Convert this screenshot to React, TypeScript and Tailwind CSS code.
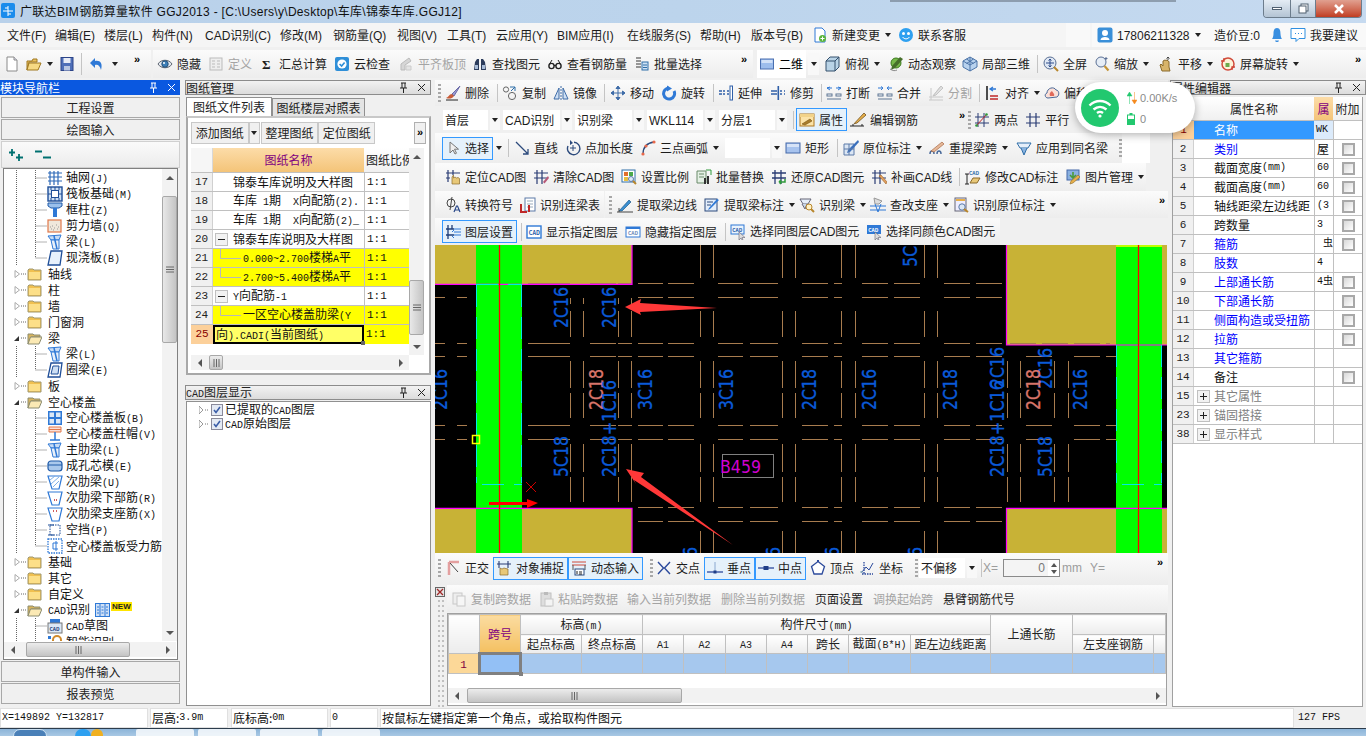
import type { ReactNode } from "react";
import clsx from "clsx";

const S = ({ children }: { children: ReactNode }) => (
  <svg viewBox="0 0 16 16" className="w-4 h-4 shrink-0">{children}</svg>
);

const ic: Record<string, ReactNode> = {
  doc: <S><path d="M3 1h7l3 3v11H3z" fill="#fff" stroke="#8a8a8a" /><path d="M10 1v3h3" fill="#dde" stroke="#8a8a8a" /></S>,
  open: <S><path d="M1 5h5l1-2h4v3h-8L1 14z" fill="#e8c060" stroke="#a07820" /><path d="M3 7h12l-3 7H1z" fill="#f6d984" stroke="#a07820" /></S>,
  save: <S><rect x="2" y="1.5" width="12" height="13" fill="#4f6fb8" stroke="#2c4488" /><rect x="4.5" y="2" width="7" height="5" fill="#e8ecf6" /><rect x="5" y="10" width="6" height="4.5" fill="#b9c6e2" /></S>,
  undo: <S><path d="M6 2v3C11 4 14 7 12 14 11 10 9 8 6 9v3L1 7z" fill="#2f79d6" /></S>,
  eye: <S><path d="M1 8c3-5 11-5 14 0-3 5-11 5-14 0z" fill="#e4e8ee" stroke="#5c6470" /><circle cx="8" cy="8" r="3.2" fill="#3d7fb8" stroke="#26527a" /><circle cx="7" cy="7" r="1" fill="#fff" /></S>,
  define: <S><rect x="2" y="2" width="12" height="12" fill="#eee" stroke="#bbb" /><path d="M4 5h3M4 8h3M4 11h3M9 5h3M9 8h3M9 11h3" stroke="#bbb" /></S>,
  cloudok: <S><rect x="1" y="1" width="14" height="14" rx="2" fill="#2f8fd8" /><circle cx="8" cy="8" r="4.6" fill="#fff" /><path d="M5.6 8l2 2 3-3.6" stroke="#2f8fd8" strokeWidth="1.6" fill="none" /></S>,
  flush: <S><path d="M3 14V8l8-6 2 3-6 4v5z" fill="#d6d6d6" stroke="#bbb" /><path d="M8 14h5v-4H8z" fill="#e4e4e4" stroke="#ccc" /></S>,
  binoc: <S><path d="M2 14l1-8 2-3h2v11zM14 14l-1-8-2-3H9v11z" fill="#2c3c5c" /><rect x="3" y="9" width="3" height="4" fill="#a8bcd8" /><rect x="10" y="9" width="3" height="4" fill="#a8bcd8" /></S>,
  glasses: <S><circle cx="4.5" cy="10" r="2.6" fill="none" stroke="#222" strokeWidth="1.4" /><circle cx="11.5" cy="10" r="2.6" fill="none" stroke="#222" strokeWidth="1.4" /><path d="M7 9.5h2M2.5 8L5 4M13.5 8L11 4" stroke="#222" /></S>,
  batch: <S><path d="M2 2h5M2 5h5M2 8h5M2 11h5" stroke="#777" strokeWidth="1.4" /><rect x="8" y="6" width="6" height="8" fill="#cfe2f4" stroke="#2f6ea8" /><path d="M9 9h4M9 11.5h4" stroke="#2f6ea8" /></S>,
  sq2d: <S><rect x="1.5" y="3" width="13" height="10" fill="#9dbdec" stroke="#4a6fb0" /><rect x="2.5" y="4" width="11" height="3" fill="#d2e1f7" /></S>,
  box3d: <S><path d="M5 1h9v10l-4 4H1V5z" fill="#b9d3e6" stroke="#35506c" /><path d="M1 5h9v10M10 5l4-4" fill="none" stroke="#35506c" /></S>,
  orbit: <S><circle cx="8" cy="7" r="5" fill="#77b94a" stroke="#3c7a1e" /><path d="M12 1l3 2-8 9-4 2 1-4z" fill="#466f2a" /><path d="M2 13c3 2 5 2 7 1" stroke="#888" fill="none" /></S>,
  cube: <S><path d="M8 1l7 4v6l-7 4-7-4V5z" fill="#b8d2ee" stroke="#4c74a8" /><path d="M8 1v14M1 5l7 4 7-4M4.5 3l7 4.5M11.5 3l-7 4.5" fill="none" stroke="#4c74a8" /></S>,
  full: <S><circle cx="7" cy="7" r="6" fill="#dfe8f4" stroke="#5a6f94" /><path d="M7 3v8M3 7h8M7 3L5.6 4.6M7 3l1.4 1.6M7 11l-1.4-1.6M7 11l1.4-1.6" stroke="#2c4a8a" fill="none" /><path d="M11 11l4 4" stroke="#b8862c" strokeWidth="2" /></S>,
  zoomg: <S><circle cx="7" cy="6" r="5" fill="#e6edf6" stroke="#5a6f94" /><path d="M10.5 10l4 4.5" stroke="#c49436" strokeWidth="2.2" /><path d="M12 1v3M10.5 2.5h3" stroke="#5a6f94" /></S>,
  hand: <S><path d="M4 15l-2-6 1-1 2 2V5l1-.5L7 4l1 .5L9 4l1 1 1 .5V11l1 4z" fill="#d8b46a" stroke="#8a6a2c" /><path d="M10 1v3M8.5 2.5L10 1l1.5 1.5" stroke="#444" fill="none" /></S>,
  rotate: <S><circle cx="8" cy="8" r="6" fill="#fdf3d8" stroke="#d04a3a" strokeWidth="1.5" /><path d="M1 5l3 0 0-3M15 11l-3 0 0 3" stroke="#d04a3a" strokeWidth="1.4" fill="none" /><rect x="5.5" y="7" width="4" height="4" fill="#6cab4c" /></S>,
  brush: <S><path d="M15 1L7 9l2 2z" fill="#9a9ad0" stroke="#6a6aa8" /><path d="M7 9c-3 0-3 3-6 4 3 1 6 1 8-2z" fill="#c85c38" /><path d="M1 15h12" stroke="#222" /></S>,
  copy: <S><circle cx="4" cy="4.5" r="2.6" fill="none" stroke="#666" /><circle cx="10" cy="11" r="3.6" fill="none" stroke="#666" /><path d="M8 2h5v4M13 2L9 6" stroke="#2f6ea8" fill="none" /></S>,
  mirror: <S><path d="M1 14L6 3v11zM15 14L10 3v11z" fill="#cfe0f4" stroke="#3f6ca8" /><path d="M8 1v14" stroke="#3f6ca8" strokeDasharray="2 1" /></S>,
  move: <S><path d="M8 1v14M1 8h14M8 1L6 3.5h4zM8 15l-2-2.5h4zM1 8l2.5-2v4zM15 8l-2.5-2v4z" fill="#3f6ca8" stroke="#3f6ca8" /></S>,
  turn: <S><path d="M8 3a5.5 5.5 0 1 0 5 3" fill="none" stroke="#2f79d6" strokeWidth="3" /><path d="M6 .5v6L11 3.500z" fill="#2f79d6" /></S>,
  extend: <S><path d="M1 6h3M5 6h2M9 6h2M1 9h3M5 9h2M9 9h2" stroke="#2f5fa8" strokeWidth="1.3" /><rect x="12" y="1" width="2.500" height="14" fill="#fff" stroke="#2f5fa8" /></S>,
  trim: <S><path d="M1 6h6M1 9h6M10 6h2M14 6h1M10 9h2M14 9h1" stroke="#2f5fa8" strokeWidth="1.3" /><rect x="7.5" y="1" width="1.600" height="14" fill="#2f5fa8" /></S>,
  breakk: <S><path d="M1 3h5M10 3h5M4 2L1 3l3 2M12 2l3 1-3 2" stroke="#2f79d6" fill="none" /><rect x="1" y="9" width="5" height="2" fill="#fff" stroke="#5e7694" /><rect x="10" y="9" width="5" height="2" fill="#fff" stroke="#5e7694" /><path d="M1 14h14" stroke="#5e7694" /></S>,
  merge: <S><path d="M1 3h4M15 3h-4M4 1.500L6 3 4 5M12 1.500L10 3l2 2" stroke="#2f79d6" fill="none" /><rect x="1" y="9" width="5" height="2" fill="#fff" stroke="#5e7694" /><rect x="10" y="9" width="5" height="2" fill="#fff" stroke="#5e7694" /><path d="M1 14h14" stroke="#5e7694" /></S>,
  split: <S><path d="M1 12h14M1 15h14M3 3v12M13 1L5 11" stroke="#c8c8c8" /><path d="M13 1l2 2-7 7-3 1z" fill="#e0e0e0" stroke="#c4c4c4" /></S>,
  align: <S><path d="M2 1v14" stroke="#222" strokeWidth="1.600" /><path d="M5 4h6M8 2L5 4l3 2" stroke="#2f79d6" fill="none" strokeWidth="1.300" /><path d="M5 11h8M5 14h8" stroke="#c02828" strokeWidth="1.500" /></S>,
  offset: <S><path d="M4 13C1 13 0 9 3 8c0-5 7-7 9-3 3 0 4 5 1 7z" fill="#fbe0d8" stroke="#4a6a9a" /><path d="M6 11c-1-2 0-4 2-5 1 2 3 3 2 5z" fill="#e06a5a" /></S>,
  attr: <S><rect x="1" y="2" width="14" height="12" fill="#fbe3a8" stroke="#b07820" /><rect x="1" y="2" width="14" height="3" fill="#f2d38a" /><path d="M3 12l8-5 2 2-7 4z" fill="#a87c2c" stroke="#7a5410" strokeWidth=".6" /></S>,
  pencil: <S><path d="M14 1l2 2-9 8-3 .8z" fill="#e8b04a" stroke="#6e5020" strokeWidth=".8" /><path d="M0 14h14M3 14l0-2M12 14v-2" stroke="#222" /></S>,
  twopt: <S><path d="M4 1v14M10 1v14M1 5h14M1 11h14" stroke="#2a3c74" /><path d="M2 14L13 2" stroke="#c02828" /><circle cx="2.500" cy="13.500" r="1.300" fill="#2e9a3a" /><circle cx="12.500" cy="2.500" r="1.300" fill="#2e9a3a" /></S>,
  para: <S><path d="M5 1v14M11 1v14M1 5h14M1 11h14" stroke="#2a3c74" strokeWidth="1.200" /></S>,
  cursor: <S><path d="M5 2v11l3-3 2 4 1.500-.8-2-4h4z" fill="#eee" stroke="#777" /></S>,
  line: <S><path d="M2 2l12 12M14 9v5H9" stroke="#2c4a7c" strokeWidth="1.300" fill="none" /></S>,
  ptlen: <S><path d="M9 2.300A6.200 6.200 0 1 1 3 6" fill="none" stroke="#2c4a7c" strokeWidth="1.400" /><path d="M8 5v6M5 8h6" stroke="#2c4a7c" /><path d="M5 0v5l3-2z" fill="#2c4a7c" /></S>,
  arc: <S><path d="M3 14C3 7 7 3 14 2" fill="none" stroke="#2c4a7c" strokeWidth="1.300" /><circle cx="3" cy="14" r="1.600" fill="#e8684a" /><circle cx="6" cy="6" r="1.600" fill="#e8684a" /><circle cx="14" cy="2" r="1.600" fill="#e8684a" /></S>,
  rect: <S><rect x="1" y="3" width="14" height="10" fill="#a7c3ee" stroke="#4468a8" /><rect x="2" y="4" width="12" height="3" fill="#d6e3f7" /></S>,
  origin: <S><path d="M1 4h10v11H1z" fill="#dbe6f4" stroke="#5c7aa8" /><path d="M15 0L5 10l-1 3 3-1L16 2z" fill="#3a6fbc" /><path d="M1 9h10M6 4v11" stroke="#5c7aa8" /></S>,
  respan: <S><path d="M1 14c0-4 4-4 4 0M8 14c0-4 4-4 4 0" fill="none" stroke="#4a6a9a" strokeWidth="1.500" /><path d="M2 11L13 2l2 2-10 8z" fill="#e6b898" stroke="#a86a48" strokeWidth=".7" /></S>,
  apply: <S><path d="M1 3h14l-3 5H4z" fill="#e6effa" stroke="#2f6ea8" /><path d="M5 8l3 7 3-7" fill="#8ab3e0" stroke="#2f6ea8" /></S>,
  locate: <S><path d="M3 1v12M8 1v5M1 4h14M1 9h4" stroke="#2a3c74" strokeWidth="1.200" /><path d="M7 15V8l1.500-2v3l1.500-1 1.500 1 1.500-.5 1.500 1v5.500z" fill="#e8c878" stroke="#8a6a2c" strokeWidth=".7" /></S>,
  clearc: <S><path d="M4 1v14M9 1v14M1 4h14M1 9h14" stroke="#2a3c74" strokeWidth="1.200" /><path d="M15 7l-5 6 1.500 1.500L16 9z" fill="#b85a78" /></S>,
  scale: <S><rect x="1" y="1" width="13" height="12" fill="#fff" stroke="#2f6ea8" /><rect x="3" y="3" width="4" height="4" fill="#e2702c" /><rect x="8" y="3" width="4" height="4" fill="#4aa84a" /><rect x="3" y="8" width="4" height="4" fill="#e8c040" /><path d="M10 10l5 5" stroke="#b8862c" strokeWidth="2" /><circle cx="10" cy="10" r="2.500" fill="#dbe8f6" stroke="#5c7aa8" /></S>,
  replace: <S><path d="M1 2h9v12H1z" fill="#e4f0e4" stroke="#6a8a6a" /><path d="M3 5h5M3 8h5" stroke="#6a8a6a" /><rect x="8" y="9" width="2" height="6" fill="#333" /><rect x="11" y="7" width="2" height="8" fill="#333" /><path d="M10 1h5v5" stroke="#2e9a3a" fill="none" /></S>,
  restore: <S><path d="M4 1v14M10 1v14M1 4h14M1 9h14" stroke="#2a3c74" strokeWidth="1.300" /><path d="M8 13h6v-3M8 13l2-2M8 13l2 2" stroke="#2e9a3a" strokeWidth="1.500" fill="none" /></S>,
  patch: <S><path d="M4 1v14M9 1v14M1 4h14M1 9h14" stroke="#2a3c74" strokeWidth="1.200" /><path d="M15 15L8 7l2-1 6 7z" fill="#e0a060" stroke="#a06020" strokeWidth=".6" /></S>,
  cadmark: <S><path d="M2 5v10M0 5h4M0 15h4" stroke="#222" /><path d="M5 14l3-5h7l-3 5z" fill="#e8c878" stroke="#8a6a2c" /><text x="4" y="6" fontSize="5" fontWeight="700" fill="#2f6ea8">CAD</text></S>,
  pic: <S><rect x="2" y="1" width="12" height="10" fill="#8ab0e0" stroke="#4468a8" /><path d="M8 3v6M5 6l3 3 3-3" stroke="#4a9a3a" strokeWidth="1.600" fill="none" /><path d="M15 8l-7 6-3 1 1-3 7-6z" fill="#e8b04a" stroke="#8a6a2c" strokeWidth=".6" /></S>,
  phi: <S><circle cx="6" cy="6" r="4" fill="none" stroke="#444" /><path d="M7 0L5 13" stroke="#444" /><path d="M9 15l2.500-6h1L15 15M10 13h4" stroke="#2c4a8a" strokeWidth="1.200" fill="none" /></S>,
  lbt: <S><rect x="5" y="1" width="10" height="13" fill="#fff" stroke="#5c7aa8" /><path d="M7 4h6M7 7h6M7 10h6" stroke="#9ab" /><path d="M1 7v8h6M9 8v7" stroke="#c02828" strokeWidth="2" fill="none" /></S>,
  edge: <S><path d="M2 14L12 3l2 2L5 14z" fill="#3a8fd0" stroke="#1f5a8c" strokeWidth=".7" /><path d="M0 15h16M2 11v4" stroke="#444" /></S>,
  mark: <S><rect x="1" y="2" width="12" height="12" fill="#e4eefa" stroke="#2c4a7c" /><path d="M3 5h6M3 8h4" stroke="#2c4a7c" /><path d="M15 3L6 12l-2 1 1-2 8-9z" fill="#2f79d6" /></S>,
  detect: <S><path d="M1 2h11l-3 5H4z" fill="#e6effa" stroke="#667" /><path d="M3 7l3 5 2-5" fill="#c9d8ea" stroke="#667" /><circle cx="10" cy="10" r="3" fill="#fff3c8" stroke="#b8862c" /><path d="M12 12l3 3" stroke="#b8862c" strokeWidth="2" /></S>,
  support: <S><path d="M4 1l8 3-3 3H5z" fill="#ddd" stroke="#999" /><path d="M0 9h16M0 13h16" stroke="#2f79d6" /><path d="M5 7l3 8 3-8" stroke="#2f79d6" fill="none" /></S>,
  identify: <S><rect x="2" y="1" width="11" height="13" fill="#eef" stroke="#667" /><rect x="3" y="2" width="9" height="2" fill="#e8b04a" /><circle cx="9" cy="10" r="3.200" fill="#dbe8f6" stroke="#5c7aa8" /><path d="M11 12l4 3" stroke="#b8862c" strokeWidth="2" /></S>,
  layer: <S><path d="M3 1v14M7 1v4M1 5h8M1 11h8" stroke="#1f3e78" strokeWidth="1.300" /><path d="M9 5h7M7 8l2-2M9 8h7M9 11h7M7 12l2 2" stroke="#2f79d6" fill="none" /></S>,
  cadshow: <S><rect x="1" y="2" width="14" height="12" fill="#fff" stroke="#2f79d6" strokeWidth="1.400" /><text x="2.800" y="10.500" fontSize="5.500" fontWeight="700" fill="#1f5aa8">CAD</text></S>,
  cadhide: <S><rect x="1" y="3" width="14" height="10" fill="#fff" stroke="#2f79d6" /><rect x="1" y="3" width="14" height="2" fill="#2f79d6" /><text x="3" y="11" fontSize="5" fontWeight="700" fill="#6a8ab8">CAD</text></S>,
  cadsel: <S><rect x="1" y="1" width="13" height="9" fill="#eaf3fc" stroke="#2f79d6" /><text x="2.200" y="8" fontSize="5" fontWeight="700" fill="#1f5aa8">CAD</text><path d="M9 8v8l2-2 1 2 1-.5-1-2h3z" fill="#ddd" stroke="#667" strokeWidth=".6" /></S>,
  cadcolor: <S><rect x="1" y="1" width="14" height="9" fill="#2f79d6" /><text x="2.200" y="8" fontSize="5" fontWeight="700" fill="#fff">CAD</text><path d="M9 8v8l2-2 1 2 1-.5-1-2h3z" fill="#ddd" stroke="#667" strokeWidth=".6" /></S>,
  ortho: <S><path d="M4 2h10M4 2v13" stroke="#e4a0a0" strokeWidth="2.500" /><path d="M5 3l8 9" stroke="#444" /></S>,
  snap: <S><path d="M3 1v7M12 1v7M1 4h14" stroke="#2a3c74" strokeWidth="1.100" /><path d="M4 15V8l2 1 2-1 2 .6 2 .4v6z" fill="#e8c878" stroke="#8a6a2c" strokeWidth=".7" /></S>,
  dyn: <S><path d="M1 2h14M1 5h14" stroke="#d04a3a" /><path d="M2 5v5M14 5v5" stroke="#555" /><rect x="4" y="9" width="9" height="6" fill="#fff" stroke="#2c4a7c" /><path d="M6 14v-3M8 12h3M8 14h3" stroke="#222" /></S>,
  cross: <S><path d="M2 2l5.500 6L2 14M14 2L8.500 8 14 14" fill="none" stroke="#2c4a9c" strokeWidth="1.400" /></S>,
  perp: <S><path d="M0 12h16" stroke="#2c4a9c" strokeWidth="1.300" /><path d="M8 2v10" stroke="#8aa8d0" /><rect x="6.500" y="10.500" width="3" height="3" fill="#1f3e88" /></S>,
  mid: <S><path d="M0 8h16" stroke="#2c4a9c" strokeWidth="1.300" /><rect x="5.500" y="6" width="5" height="4" fill="#1f3e88" /></S>,
  vertex: <S><path d="M8 1.500l6.500 5-2.500 7.500H4L1.500 6.500z" fill="#fff" stroke="#2c4a9c" strokeWidth="1.300" /><rect x="7" y="0" width="2" height="2" fill="#2c4a9c" /></S>,
  coord: <S><path d="M3 14h11M5 2v12" stroke="#2c4a9c" strokeDasharray="1.500 1" strokeWidth="1.300" /><path d="M3 12l4-5 3 3 4-7" stroke="#2c4a9c" fill="none" /><rect x="1.500" y="11" width="2" height="2" fill="#8ab" /></S>,
  cp: <S><rect x="2" y="2" width="9" height="11" fill="#eee" stroke="#c8c8c8" /><rect x="6" y="5" width="8" height="10" fill="#f6f6f6" stroke="#c8c8c8" /></S>,
  paste: <S><rect x="3" y="2" width="10" height="13" fill="#dedede" stroke="#c0c0c0" /><rect x="6" y="1" width="4" height="3" fill="#bbb" /><rect x="7" y="8" width="8" height="7" fill="#f4f4f4" stroke="#c8c8c8" /></S>,
  newchg: <S><path d="M3 1h7l3 3v11H3z" fill="#fff" stroke="#2f79d6" /><circle cx="10.500" cy="11.500" r="3.500" fill="#5ab43c" /><path d="M10.500 9.500v4M8.500 11.500h4" stroke="#fff" /></S>,
  service: <S><circle cx="8" cy="8" r="7" fill="#2ea0f0" /><circle cx="5.500" cy="6.500" r="1.500" fill="#fff" /><circle cx="10.500" cy="6.500" r="1.500" fill="#fff" /><path d="M4.500 10c2 2.500 5 2.500 7 0" stroke="#fff" fill="none" /></S>,
  user: <S><rect x="0.500" y="0.500" width="15" height="15" rx="2" fill="#3a8fd8" /><circle cx="8" cy="6" r="3" fill="#fff" /><path d="M3.500 13c0-4 9-4 9 0z" fill="#fff" /></S>,
  bell: <S><path d="M8 1c3 0 3.500 3 3.500 6s1.500 5 1.500 5H3s1.500-2 1.500-5S5 1 8 1z" fill="#3a8fe0" /><path d="M6 13.500c.5 2 3.500 2 4 0z" fill="#3a8fe0" /></S>,
  advice: <S><path d="M1 1.500h14v10H9l-3 3v-3H1z" fill="#fff" stroke="#2f8fe0" /><path d="M5 6.500h1M8 6.500h1M11 6.500h1" stroke="#2f8fe0" /></S>,
};

const t: Record<string, ReactNode> = {
  grid: <S><path d="M3 1v14M7 1v14M11 1v14M1 3h14M1 7h14M1 11h14" stroke="#2f6ab8" strokeWidth="1.200" /></S>,
  raft: <S><rect x="1" y="1" width="14" height="14" fill="#cfe0f4" stroke="#1f4e98" strokeWidth="1.400" /><rect x="4.500" y="4.500" width="7" height="7" fill="#fff" stroke="#1f4e98" /><path d="M4 1v3M8 1v3M12 1v3M4 12v3M8 12v3M12 12v3M1 8h3M12 8h3" stroke="#1f4e98" /></S>,
  col: <S><path d="M1 1h14v3l-3 2H4L1 4z" fill="#9ac0ec" stroke="#1f5aa8" /><rect x="6" y="6" width="4" height="9" fill="#2f79d6" /></S>,
  wall: <S><rect x="1" y="2" width="13" height="12" fill="#f0e8dc" stroke="#e0784a" strokeWidth="1.200" /><path d="M4 11h1M7 10h1M10 11h1M5 8h1M9 7h1M6 12h1M3 9h1M11 9h1" stroke="#999" /></S>,
  beam: <S><path d="M1 2l13-1-2 5H4z" fill="#c8dcf4" stroke="#2f79d6" /><path d="M4 6l2 9h6V6z" fill="#e8f0fa" stroke="#2f79d6" /><path d="M7 2l3 13" stroke="#2f79d6" strokeWidth="1.500" /></S>,
  slab: <S><path d="M4 1h11l-2 14H1z" fill="#e8f1fc" stroke="#1f4e98" strokeWidth="1.300" /></S>,
  ring: <S><path d="M4 1h11l-2 14H1z" fill="#fff" stroke="#1f4e98" strokeWidth="1.300" /><path d="M6 4h6l-1 8H4z" fill="#cfe0f4" stroke="#1f4e98" /></S>,
  hollow: <S><rect x="1" y="1" width="14" height="14" fill="#2f79d6" /><rect x="2.500" y="2.500" width="4.500" height="4.500" fill="#dbe8f6" /><rect x="9" y="2.500" width="4.500" height="4.500" fill="#dbe8f6" /><rect x="2.500" y="9" width="4.500" height="4.500" fill="#dbe8f6" /><rect x="9" y="9" width="4.500" height="4.500" fill="#dbe8f6" /></S>,
  cap: <S><path d="M2 1h12v5H2z" fill="#fbe0d8" stroke="#e0784a" /><path d="M2 3.500h12" stroke="#e0784a" /><path d="M8 6v8M3 14h10" stroke="#2f79d6" strokeWidth="1.500" /></S>,
  core: <S><rect x="1" y="3" width="14" height="10" rx="3" fill="#a9c8ec" stroke="#1f5aa8" strokeWidth="1.200" /><path d="M1 7h14" stroke="#1f5aa8" /></S>,
  rib: <S><path d="M1 2h14l-3 13H5z" fill="#fff" stroke="#2f79d6" strokeWidth="1.200" /><path d="M3 6l5-4M4 10l8-7M6 13l6-6" stroke="#7fb0e8" /></S>,
  ribb: <S><path d="M1 2h14l-3 13H5z" fill="#fff" stroke="#2f79d6" strokeWidth="1.200" /><path d="M7 10h1M9 10h1" stroke="#c02828" strokeWidth="1.400" /></S>,
  ribt: <S><path d="M1 2h14l-3 13H5z" fill="#fff" stroke="#2f79d6" strokeWidth="1.200" /><path d="M6 5h1M9 5h1" stroke="#c02828" strokeWidth="1.400" /></S>,
  gap: <S><rect x="3" y="3" width="10" height="10" fill="#fff" stroke="#1f4e98" strokeDasharray="1.500 1" /><path d="M1 3h6M1 13h6" stroke="#1f4e98" /></S>,
  bar: <S><rect x="1" y="1" width="14" height="14" fill="#fff" stroke="#2f79d6" strokeDasharray="1.500 1" strokeWidth="1.300" /><path d="M11 5H6v6h5M9 3v10" stroke="#2f79d6" fill="none" /></S>,
  cad: <S><rect x="3" y="1" width="10" height="5" fill="#2f79d6" /><rect x="1" y="5" width="14" height="10" fill="#dbe8f6" stroke="#777" /><text x="2.500" y="13" fontSize="5" fontWeight="700" fill="#1f3e78">CAD</text></S>,
  smart: <S><rect x="1" y="2" width="3" height="3" fill="#2f79d6" /><rect x="1" y="8" width="3" height="3" fill="#2f79d6" /><path d="M6 15V6a4 4 0 0 1 8 0v9" fill="none" stroke="#d08a2c" strokeWidth="2" /></S>,
};

// the app mixes a wider Latin face and a bitmap-looking mono into CJK text
const sans = "font-['Liberation_Sans',sans-serif]";
const mono = "font-['Liberation_Mono',monospace] text-[10px]";
const mix = (s: string, cls: string) =>
  s.split(/([\x20-\x7e]+)/).map((p, i) => (i % 2 ? <span key={i} className={cls}>{p}</span> : p));
const Tx = ({ s }: { s: string }) => <>{mix(s, sans)}</>;
const Mx = ({ s }: { s: string }) => <>{mix(s, mono)}</>;

const M = ({ children }: { children: ReactNode }) => (
  <span className="font-['Liberation_Mono','Noto_Sans_CJK_SC',monospace] text-[10px]">{children}</span>
);

const N = ({ children }: { children: ReactNode }) => (
  <span className="font-['Liberation_Mono',monospace] text-[11px]">{children}</span>
);

const Tri = ({ c = "" }: { c?: string }) => (
  <svg viewBox="0 0 6 4" className={clsx("w-[6px] h-[4px] shrink-0", c)}><path d="M0 0h6L3 4z" fill="#222" /></svg>
);

const Grip = ({ c = "" }: { c?: string }) => (
  <div className={clsx("flex flex-col gap-[2px] w-[3px] shrink-0", c)}>
    <i className="block h-[2px] bg-[#a8a8a8]" />
    <i className="block h-[2px] bg-[#a8a8a8]" />
    <i className="block h-[2px] bg-[#a8a8a8]" />
    <i className="block h-[2px] bg-[#a8a8a8]" />
    <i className="block h-[2px] bg-[#a8a8a8]" />
  </div>
);

const Sep = ({ c = "" }: { c?: string }) => <div className={clsx("w-px h-[18px] bg-[#c4c4c4] shrink-0", c)} />;

const More = ({ c = "" }: { c?: string }) => (
  <span className={clsx("text-[11px] font-bold leading-none self-start mt-[4px] shrink-0", sans, c)}>»</span>
);

function Tool({ i, label, c = "", dim, arrow, on }: { i?: string; label: ReactNode; c?: string; dim?: boolean; arrow?: boolean; on?: boolean }) {
  return (
    <div className={clsx("flex items-center h-[23px] shrink-0 whitespace-nowrap", on && "border border-[#3399ff] bg-[#e5f1fb] pl-[2px]", c)}>
      {i && ic[i]}
      <span className={clsx(i && "ml-1", dim ? "text-[#a4a4a4]" : "text-[#1c1c1c]")}>{typeof label === "string" ? <Tx s={label} /> : label}</span>
      {arrow && <Tri c="ml-[5px]" />}
    </div>
  );
}

function Combo({ label, c }: { label?: string; c: string }) {
  return (
    <div className="flex items-center shrink-0">
      <div className={clsx("h-[20px] bg-white pl-[2px] leading-[20px] whitespace-nowrap text-[#1c1c1c]", c)}>{label && <Tx s={label} />}</div>
      <div className="ml-[2px] w-[10px] h-[20px] bg-[#f8f8f8] flex items-center justify-center"><Tri /></div>
    </div>
  );
}

const bar = "bg-gradient-to-b from-[#fbfbfb] to-[#ededed] flex items-center";

function PanelHead({ title, blue }: { title: string; blue?: boolean }) {
  const col = blue ? "#fff" : "#222";
  return (
    <div className={clsx("h-[15px] flex items-center justify-between shrink-0 pr-[4px] leading-none", blue ? "bg-[#0a58e0] text-white" : "bg-gradient-to-b from-[#f2f2f2] to-[#dcdcdc] border border-[#8c8c8c] text-[#222]")}>
      <span><Mx s={title} /></span>
      <div className="flex items-center gap-[9px]">
        <svg viewBox="0 0 9 11" className="w-[9px] h-[11px]"><path d="M2 1h5M3 1v5M6 1v5M1 6h7M4.500 6v5" stroke={col} fill="none" /></svg>
        <svg viewBox="0 0 9 9" className="w-[9px] h-[9px]"><path d="M1 1l7 7M8 1L1 8" stroke={col} /></svg>
      </div>
    </div>
  );
}

function VBar({ thumb, c = "" }: { thumb: string; c?: string }) {
  return (
    <div className={clsx("flex flex-col w-[15px] bg-[#f2f2f2] shrink-0", c)}>
      <div className="h-[17px] flex items-center justify-center"><svg viewBox="0 0 8 4" className="w-[8px] h-[4px]"><path d="M0 4h8L4 0z" fill="#555" /></svg></div>
      <div className="flex-1 min-h-0">
        <div className={clsx("w-full bg-gradient-to-r from-[#e8e8e8] to-[#c4c4c4] border border-[#a8a8a8] rounded-[2px] flex items-center justify-center", thumb)}>
          <svg viewBox="0 0 8 7" className="w-[8px] h-[7px]"><path d="M0 1h8M0 3.500h8M0 6h8" stroke="#666" /></svg>
        </div>
      </div>
      <div className="h-[17px] flex items-center justify-center"><svg viewBox="0 0 8 4" className="w-[8px] h-[4px]"><path d="M0 0h8L4 4z" fill="#555" /></svg></div>
    </div>
  );
}

function HBar({ thumb, c = "" }: { thumb: string; c?: string }) {
  return (
    <div className={clsx("flex items-center h-[15px] bg-[#f2f2f2] shrink-0", c)}>
      <div className="w-[17px] flex justify-center shrink-0"><svg viewBox="0 0 4 8" className="w-[4px] h-[8px]"><path d="M4 0v8L0 4z" fill="#555" /></svg></div>
      <div className="flex-1 min-w-0 h-full">
        <div className={clsx("h-full bg-gradient-to-b from-[#ececec] to-[#c4c4c4] border border-[#a8a8a8] rounded-[2px] flex items-center justify-center", thumb)}>
          <svg viewBox="0 0 7 8" className="w-[7px] h-[8px]"><path d="M1 0v8M3.500 0v8M6 0v8" stroke="#666" /></svg>
        </div>
      </div>
      <div className="w-[17px] flex justify-center shrink-0"><svg viewBox="0 0 4 8" className="w-[4px] h-[8px]"><path d="M0 0v8l4-4z" fill="#555" /></svg></div>
    </div>
  );
}

const NavBtn = ({ label, c = "" }: { label: string; c?: string }) => (
  <div className={clsx("h-[21px] ml-px bg-[#f0f0f0] border border-[#a8a8a8] flex items-center justify-center text-[#222] shrink-0", c)}>{label}</div>
);

const menu: [string, string][] = [
  ["文件(F)", "w-[48px]"], ["编辑(E)", "w-[49px]"], ["楼层(L)", "w-[48px]"], ["构件(N)", "w-[53px]"],
  ["CAD识别(C)", "w-[75px]"], ["修改(M)", "w-[53px]"], ["钢筋量(Q)", "w-[64px]"], ["视图(V)", "w-[50px]"],
  ["工具(T)", "w-[49px]"], ["云应用(Y)", "w-[61px]"], ["BIM应用(I)", "w-[70px]"], ["在线服务(S)", "w-[73px]"],
  ["帮助(H)", "w-[51px]"], ["版本号(B)", "w-[61px]"],
];

type Node = { l: 1 | 2; t: string; k?: string; i?: string; open?: boolean; last?: boolean; extra?: boolean };

const tree: Node[] = [
  { l: 2, t: "轴网", k: "(J)", i: "grid" },
  { l: 2, t: "筏板基础", k: "(M)", i: "raft" },
  { l: 2, t: "框柱", k: "(Z)", i: "col" },
  { l: 2, t: "剪力墙", k: "(Q)", i: "wall" },
  { l: 2, t: "梁", k: "(L)", i: "beam" },
  { l: 2, t: "现浇板", k: "(B)", i: "slab", last: true },
  { l: 1, t: "轴线" },
  { l: 1, t: "柱" },
  { l: 1, t: "墙" },
  { l: 1, t: "门窗洞" },
  { l: 1, t: "梁", open: true },
  { l: 2, t: "梁", k: "(L)", i: "beam" },
  { l: 2, t: "圈梁", k: "(E)", i: "ring", last: true },
  { l: 1, t: "板" },
  { l: 1, t: "空心楼盖", open: true },
  { l: 2, t: "空心楼盖板", k: "(B)", i: "hollow" },
  { l: 2, t: "空心楼盖柱帽", k: "(V)", i: "cap" },
  { l: 2, t: "主肋梁", k: "(L)", i: "beam" },
  { l: 2, t: "成孔芯模", k: "(E)", i: "core" },
  { l: 2, t: "次肋梁", k: "(U)", i: "rib" },
  { l: 2, t: "次肋梁下部筋", k: "(R)", i: "ribb" },
  { l: 2, t: "次肋梁支座筋", k: "(X)", i: "ribt" },
  { l: 2, t: "空挡", k: "(P)", i: "gap" },
  { l: 2, t: "空心楼盖板受力筋", i: "bar", last: true },
  { l: 1, t: "基础" },
  { l: 1, t: "其它" },
  { l: 1, t: "自定义" },
  { l: 1, t: "CAD识别", open: true, extra: true },
  { l: 2, t: "CAD草图", i: "cad" },
  { l: 2, t: "智能识别", i: "smart" },
];

const dot = "#666";

function TreeRow({ n }: { n: Node }) {
  if (n.l === 1) {
    return (
      <div className="flex items-center h-[16px] whitespace-nowrap">
        <svg viewBox="0 0 23 16" className="w-[23px] h-[16px] shrink-0">
          {n.open
            ? <path d="M10 11h5V6z" fill="#333" />
            : <path d="M11 4.500v7l4.500-3.500z" fill="#fff" stroke="#aaa" />}
          <path d="M17 8h6" stroke={dot} strokeDasharray="1 1" />
        </svg>
        <svg viewBox="0 0 15 14" className="w-[15px] h-[14px] shrink-0">
          {n.open
            ? <><path d="M1 3h5l1 1h6v2H4L1 13z" fill="#d8b45c" stroke="#8c8c70" /><path d="M3.500 6H15l-3 7H1z" fill="#fbe9b4" stroke="#8c8c70" /></>
            : <><path d="M1 3l1-1h4l1 1h7v10H1z" fill="#f0c050" stroke="#a09870" /><rect x="2" y="5" width="11" height="7" fill="#fcdf88" /></>}
        </svg>
        <span className="ml-[6px] text-[#111]"><Mx s={n.t} /></span>
        {n.extra && (
          <>
            <svg viewBox="0 0 15 14" className="ml-[5px] w-[15px] h-[14px] shrink-0"><rect x="0.500" y="0.500" width="14" height="13" fill="#cfe0f6" stroke="#2f79d6" /><path d="M5 1v12M10 1v12M2 4h2M2 7h2M2 10h2M6.500 4h2M6.500 7h2M6.500 10h2M11 4h2M11 7h2M11 10h2" stroke="#2f79d6" /></svg>
            <span className={clsx("ml-[1px] self-start bg-[#ffe400] text-[#222] font-bold text-[8px] leading-[9px] px-px", sans)}>NEW</span>
          </>
        )}
      </div>
    );
  }
  return (
    <div className="flex items-center h-[16px] whitespace-nowrap">
      <svg viewBox="0 0 43 16" className="w-[43px] h-[16px] shrink-0">
        <path d="M12.500 0v16" stroke={dot} strokeDasharray="1 1" />
        <path d={n.last ? "M31.500 0v8H43" : "M31.500 0v16M31.500 8H43"} stroke={dot} strokeDasharray="1 1" fill="none" />
      </svg>
      {n.i && t[n.i]}
      <span className="ml-[3px] text-[#111]"><Mx s={n.t} />{n.k && <M>{n.k}</M>}</span>
    </div>
  );
}

const sheets = [
  { n: 17, t: "锦泰车库说明及大样图", p: 0 },
  { n: 18, t: "车库 1期  X向配筋(2).", p: 0 },
  { n: 19, t: "车库 1期  X向配筋(2)_", p: 0 },
  { n: 20, t: "锦泰车库说明及大样图", p: 1 },
  { n: 21, t: "0.000~2.700楼梯A平", p: 2 },
  { n: 22, t: "2.700~5.400楼梯A平", p: 2 },
  { n: 23, t: "Y向配筋-1", p: 1 },
  { n: 24, t: "一区空心楼盖肋梁(Y", p: 2 },
];

const Minus = ({ sign = "-" }: { sign?: string }) => (
  <svg viewBox="0 0 13 13" className="w-[13px] h-[13px] shrink-0">
    <rect x="0.500" y="0.500" width="12" height="12" fill="#f2f2f2" stroke="#c0c0c0" />
    <path d={sign === "-" ? "M3 6.500h7" : "M3 6.500h7M6.500 3v7"} stroke="#222" />
  </svg>
);

type Prop = { t: string; v?: string; blue?: boolean; gray?: boolean; chk?: boolean; n: number };
const props: Prop[] = [
  { n: 2, t: "类别", v: "屋", blue: true, chk: true },
  { n: 3, t: "截面宽度", v: "60", chk: true },
  { n: 4, t: "截面高度", v: "60", chk: true },
  { n: 5, t: "轴线距梁左边线距", v: "(3", chk: true },
  { n: 6, t: "跨数量", v: "3", chk: true },
  { n: 7, t: "箍筋", v: " 虫", blue: true, chk: true },
  { n: 8, t: "肢数", v: "4", blue: true },
  { n: 9, t: "上部通长筋", v: "4虫", blue: true, chk: true },
  { n: 10, t: "下部通长筋", blue: true, chk: true },
  { n: 11, t: "侧面构造或受扭筋", blue: true, chk: true },
  { n: 12, t: "拉筋", blue: true, chk: true },
  { n: 13, t: "其它箍筋", blue: true },
  { n: 14, t: "备注", chk: true },
  { n: 15, t: "其它属性", gray: true },
  { n: 23, t: "锚固搭接", gray: true },
  { n: 38, t: "显示样式", gray: true },
];

const hLines = [283, 297, 343, 356, 425, 439, 507, 521];
const hSegs = [[528, 570], [590, 616], [618, 632], [638, 663], [668, 694], [718, 743], [750, 778], [802, 828], [834, 842], [862, 888], [894, 920], [944, 970], [976, 1002]];
const hRight = [[1026, 1052], [1074, 1100], [1106, 1116]];
const hLeft = [[435, 445], [457, 467]];
const vLines = [570.5, 583.5, 618.5, 631.5, 700.5, 713.5, 782.5, 795.5, 841.5, 855.5, 924.5, 937.5, 1007.5, 1020.5, 1054.5, 1068.5];
const vFull = [[245, 278], [311, 337], [361, 388], [393, 418], [444, 472], [477, 502], [531, 553]];
const vMid = [[361, 388], [393, 418], [444, 472], [477, 502]];
const vUp = [[298, 304], [311, 337], [361, 388], [393, 418], [444, 472], [477, 502]];

const rebar: [string, number, number, number, string?][] = [
  ["2C16", 567.7, 328, 41],
  ["2C16", 615.7, 328, 41],
  ["2C16", 447.3, 410, 41],
  ["2C18", 602.7, 410, 41, "#d8756a"],
  ["2C18+1C16", 615.7, 477, 97],
  ["3C16", 651.7, 410, 41],
  ["3C16", 733.3, 410, 41],
  ["5C18", 567.7, 477, 41],
  ["5C18", 917.3, 266.7, 41],
  ["2C18", 815.7, 410, 41],
  ["2C16", 875.7, 410, 41],
  ["2C18", 957.3, 410, 41],
  ["2C18+1C16", 1004, 477, 97],
  ["2C16", 1004, 388, 41],
  ["2C16", 1052.3, 389, 41],
  ["2C18", 1040, 410, 41, "#d8756a"],
  ["2C16", 1087.3, 410, 41],
  ["5C18", 1052.3, 477, 41],
  ["2C16", 697, 588, 41],
  ["2C16", 780, 588, 41],
  ["2C16", 839, 588, 41],
  ["2C16", 921.7, 588, 41],
];

function Drawing() {
  return (
    <svg viewBox="435 245 733 308" className="block w-[733px] h-[308px]">
      <rect x="435" y="245" width="732" height="308" fill="#000" />
      <rect x="1167" y="245" width="1" height="308" fill="#f0f0f0" />
      <g fill="#c8b236">
        <rect x="435" y="245" width="197" height="39" />
        <rect x="435" y="508" width="197" height="45" />
        <rect x="1006" y="245" width="161" height="100" />
        <rect x="1006" y="508" width="161" height="45" />
      </g>
      <g stroke="#a87c4f" fill="none">
        {hLines.map((y) => hSegs.filter(([a]) => a >= 632 || ![297, 507, 521].includes(y)).map(([a, b]) => <path key={`${y}-${a}`} d={`M${a} ${y + 0.5}H${b}`} />))}
        {[356, 425, 439].map((y) => hRight.map(([a, b]) => <path key={`${y}r${a}`} d={`M${a} ${y + 0.5}H${b}`} />))}
        {[297, 343, 356, 425, 439].map((y) => hLeft.map(([a, b]) => <path key={`${y}l${a}`} d={`M${a} ${y + 0.5}H${b}`} />))}
        {vLines.map((x) => (x < 632 ? vUp : x > 1000 ? vMid : vFull).map(([a, b]) => <path key={`${x}-${a}`} d={`M${x} ${a}V${b}`} />))}
      </g>
      <path d="M1010 343.500H1110" stroke="#a87c4f" strokeDasharray="26 6" />
      <g fill="#00ff00">
        <rect x="476" y="245" width="46" height="308" />
        <rect x="1116" y="245" width="46" height="308" />
      </g>
      <g stroke="#ff00ff" fill="none" strokeWidth="1.200">
        <path d="M435 284.300H632V245M435 508.300H632V553" />
        <path d="M1006.500 245V345H1167M1006.500 553V508.300H1167" />
      </g>
      <path d="M1116 246H1162" stroke="#ffff00" strokeWidth="1.500" />
      <g stroke="#ff0000" strokeWidth="1.300">
        <path d="M499.500 245V553M1138.500 245V553" />
      </g>
      <g stroke="#00e8e8" strokeDasharray="22 10" fill="none">
        <path d="M476.500 285V483M521.500 285V483M482 484.500H522" />
        <path d="M1116.500 345V483M1161.500 345V483M1122 484.500H1162" />
        <path d="M476 284.500H522" />
      </g>
      <g fontFamily="'DejaVu Sans',sans-serif" fontSize="19" strokeWidth=".35">
        {rebar.map(([s, x, y, len, col], i) => (
          <text key={i} transform={`translate(${x} ${y}) rotate(-90)`} textLength={len} lengthAdjust="spacingAndGlyphs" fill={col ?? "#0a5ad8"} stroke={col ?? "#0a5ad8"}>{s}</text>
        ))}
      </g>
      <rect x="722.500" y="454.500" width="51" height="23" fill="none" stroke="#808080" />
      <text x="720" y="473" fontFamily="'DejaVu Sans',sans-serif" fontSize="18" textLength="41" lengthAdjust="spacingAndGlyphs" fill="#d000d0">B459</text>
      <rect x="472.500" y="435.500" width="7" height="8" fill="none" stroke="#ffff00" strokeWidth="1.500" />
      <path d="M526 482l10 10M536 482l-10 10" stroke="#ff0000" strokeWidth=".8" />
      <path d="M489 502h38v-3l11 4-11 5v-3h-38z" fill="#ff0000" />
      <path d="M625 307l16-8-1 4 77 5-77 4 1 3z" fill="#ff3838" />
      <path d="M626 469l18 4-3 4 92 68-99-65 2 4z" fill="#ff3838" />
    </svg>
  );
}

const th = "border border-[#c0c0c0] bg-gradient-to-b from-white to-[#ececec] font-normal text-[#222] p-0 text-center";

export default function App() {
  return (
    <div className="relative w-[1366px] h-[736px] overflow-hidden bg-[#f0f0f0] flex flex-col text-[12px] leading-none font-['Noto_Sans_CJK_SC',sans-serif]">
      {/* title bar */}
      <div className="h-[23px] shrink-0 flex items-start bg-gradient-to-r from-[#b9d1ea] via-[#bcd4ec] to-[#c6daf0]">
        <div className="mt-[3px] ml-px w-[14px] h-[15px] rounded-[2px] bg-[#1a8cec] flex items-center justify-center shrink-0">
          <svg viewBox="0 0 10 10" className="w-[10px] h-[10px]"><path d="M5 0v10M0 5h10M2 2h3M5 8h3" stroke="#fff" fill="none" /></svg>
        </div>
        <span className="ml-[5px] mt-[5px] text-[#101010] whitespace-nowrap tracking-[0.3px]"><Tx s="广联达BIM钢筋算量软件 GGJ2013 - [C:\Users\y\Desktop\车库\锦泰车库.GGJ12]" /></span>
        <div className="ml-auto mr-[4px] flex h-[18px] border border-t-0 border-[#6c7c8c] rounded-b-[4px] overflow-hidden">
          <div className="w-[27px] bg-gradient-to-b from-[#e4ecf4] to-[#b4c4d4] flex items-center justify-center border-r border-[#6c7c8c]"><i className="block w-[10px] h-[3px] bg-white border border-[#506070]" /></div>
          <div className="w-[25px] bg-gradient-to-b from-[#e4ecf4] to-[#b4c4d4] flex items-center justify-center border-r border-[#6c7c8c]">
            <svg viewBox="0 0 11 11" className="w-[11px] h-[11px]"><rect x="3" y="1" width="7" height="7" fill="#fff" stroke="#506070" /><rect x="1" y="3" width="7" height="7" fill="#fff" stroke="#506070" /></svg>
          </div>
          <div className="w-[45px] bg-gradient-to-b from-[#e0a090] to-[#c03c20] flex items-center justify-center">
            <svg viewBox="0 0 12 10" className="w-[12px] h-[10px]"><path d="M2 1l8 8M10 1l-8 8" stroke="#fff" strokeWidth="2.500" /></svg>
          </div>
        </div>
      </div>
      <div className="absolute left-[890px] top-0 w-[286px] h-[2px] bg-[#5a6470]/50" />

      {/* menu */}
      <div className="h-[24px] shrink-0 flex items-center pl-[7px] bg-[#f5f5f5] text-[#1c1c1c] whitespace-nowrap">
        {menu.map(([s, w]) => <span key={s} className={w}><Tx s={s} /></span>)}
        <Tool i="newchg" label="新建变更" arrow c="w-[86px]" />
        <Tool i="service" label="联系客服" c="w-[72px]" />
        <div className="ml-[96px] w-[24px] h-[24px] bg-[#f9f9f9]" />
        <div className="ml-[2px] flex-1 h-[24px] bg-[#f9f9f9] flex items-center pl-[5px]">
          <Tool i="user" label="17806211328" arrow c="w-[117px]" />
          <span><Tx s="造价豆:0" /></span>
          <div className="ml-[9px] w-[16px]">{ic.bell}</div>
          <div className="ml-[5px]" />
          <Tool i="advice" label="我要建议" />
        </div>
      </div>

      {/* main toolbar */}
      <div className="h-[33px] shrink-0 flex items-start pt-[3px]">
        <div className={clsx(bar, "h-[28px] w-[151px] pl-[4px] shrink-0")}>
          {ic.doc}
          <div className="ml-[6px]">{ic.open}</div>
          <Tri c="ml-[5px]" />
          <div className="ml-[6px]">{ic.save}</div>
          <Sep c="ml-[6px] h-[22px]" />
          <div className="ml-[7px]">{ic.undo}</div>
          <Tri c="ml-[7px]" />
          <More c="ml-[16px]" />
        </div>
        <div className={clsx(bar, "h-[28px] w-[600px] ml-[2px] pl-[4px] shrink-0")}>
          <Tool i="eye" label="隐藏" c="w-[51px]" />
          <Tool i="define" label="定义" dim c="w-[51px]" />
          <Tool label={<span className="flex items-center"><b className="w-[20px] text-[13px] pl-[3px] font-['Liberation_Serif',serif]">Σ</b>汇总计算</span>} c="w-[75px]" />
          <Tool i="cloudok" label="云检查" c="w-[64px]" />
          <Tool i="flush" label="平齐板顶" dim c="w-[74px]" />
          <Tool i="binoc" label="查找图元" c="w-[75px]" />
          <Tool i="glasses" label="查看钢筋量" c="w-[87px]" />
          <Tool i="batch" label="批量选择" c="w-[107px]" />
          <More />
        </div>
        <div className={clsx(bar, "h-[28px] ml-[4px] flex-1 min-w-0")}>
          <div className="w-[49px] h-[28px] bg-white pl-[2px] flex items-center shrink-0">{ic.sq2d}<span className="ml-1">二维</span></div>
          <div className="ml-[2px] w-[11px] h-[22px] bg-[#f8f8f8] flex items-center justify-center shrink-0"><Tri /></div>
          <Tool i="box3d" label="俯视" arrow c="ml-[6px] w-[63px]" />
          <Tool i="orbit" label="动态观察" c="w-[74px]" />
          <Tool i="cube" label="局部三维" c="w-[75px]" />
          <Sep />
          <Tool i="full" label="全屏" c="ml-[5px] w-[51px]" />
          <Tool i="zoomg" label="缩放" arrow c="w-[64px]" />
          <Tool i="hand" label="平移" arrow c="w-[62px]" />
          <Tool i="rotate" label="屏幕旋转" arrow c="w-[135px]" />
          <More />
        </div>
      </div>

      {/* body */}
      <div className="h-[628px] shrink-0 flex">
        {/* nav */}
        <div className="w-[180px] shrink-0 flex flex-col">
          <PanelHead title="模块导航栏" blue />
          <NavBtn label="工程设置" c="mt-[2px]" />
          <NavBtn label="绘图输入" c="mt-px" />
          <div className="h-[27px] mt-px ml-px flex items-center gap-[11px] pl-[6px] bg-gradient-to-b from-[#fafafa] to-[#ececec] border border-[#d0d0d0] shrink-0">
            <svg viewBox="0 0 16 12" className="w-[16px] h-[12px]"><path d="M4 0v7M1 3.500h6M11 5v7M8 8.500h7" stroke="#007070" strokeWidth="1.800" /></svg>
            <svg viewBox="0 0 16 12" className="w-[16px] h-[12px]"><path d="M0 2.500h7M8 8.500h8" stroke="#007070" strokeWidth="1.800" /></svg>
          </div>
          <div className="h-[492px] ml-[3px] w-[175px] border border-[#808080] bg-white flex flex-col shrink-0">
            <div className="h-[472px] flex shrink-0">
              <div className="w-[158px] overflow-hidden shrink-0 pt-px">
                {tree.map((n, i) => <TreeRow key={i} n={n} />)}
              </div>
              <VBar thumb="h-[147px] mt-[10px]" />
            </div>
            <HBar thumb="w-[104px] ml-[5px]" c="mt-[1px] mr-[1px]" />
          </div>
          <NavBtn label="单构件输入" c="mt-px" />
          <NavBtn label="报表预览" c="mt-px" />
        </div>

        {/* drawing panel */}
        <div className="w-[246px] ml-[5px] shrink-0 flex flex-col">
          <PanelHead title="图纸管理" />
          <div className="h-[19px] mt-[2px] flex items-end shrink-0">
            <div className="ml-px w-[86px] h-[19px] bg-white border border-b-0 border-[#909090] flex items-center justify-center text-[#222]">图纸文件列表</div>
            <div className="w-[93px] h-[18px] bg-[#e4e4e4] border border-b-0 border-[#909090] flex items-center justify-center text-[#222]">图纸楼层对照表</div>
          </div>
          <div className="h-[259px] ml-px border-2 border-[#a8a8a8] border-t-[#c8c8c8] bg-white px-[3px] shrink-0">
            <div className="h-[23px] mt-[3px] flex items-center">
              <div className="w-[58px] h-[22px] bg-[#f0f0f0] border border-[#c8c8c8] flex items-center justify-center text-[#222]">添加图纸</div>
              <div className="w-[11px] h-[22px] bg-[#f0f0f0] border border-[#c8c8c8] flex items-center justify-center"><Tri /></div>
              <div className="ml-px w-[58px] h-[22px] bg-[#f0f0f0] border border-[#c8c8c8] flex items-center justify-center text-[#222]">整理图纸</div>
              <div className="w-[57px] h-[22px] bg-[#f0f0f0] border border-[#c8c8c8] flex items-center justify-center text-[#222]">定位图纸</div>
              <div className="ml-[39px] w-[12px] h-[22px] bg-[#f0f0f0] border border-[#b0b0b0] flex justify-center"><More c="mt-[1px]" /></div>
            </div>
            <div className="mt-[4px] w-[233px] flex h-[207px]">
              <div className="w-[218px] shrink-0">
                <div className="flex h-[25px] border-b border-[#c0c0c0]">
                  <div className="w-[22px] bg-[#f6f6f6] border-r border-[#d8d8d8]" />
                  <div className="w-[151px] bg-gradient-to-b from-[#fcdca8] to-[#f4c478] flex items-center justify-center text-[#800080]">图纸名称</div>
                  <div className="w-[45px] bg-gradient-to-b from-white to-[#f0f0f0] flex items-center pl-[2px] overflow-hidden whitespace-nowrap text-[#222]">图纸比例</div>
                </div>
                {sheets.map((r) => (
                  <div key={r.n} className="flex h-[19px] border-b border-[#c0c0c0]">
                    <div className="w-[22px] bg-[#f0f0f0] border-r border-[#d0d0d0] flex items-center justify-center text-[#222]"><N>{r.n}</N></div>
                    <div className={clsx("relative w-[151px] flex items-center overflow-hidden whitespace-pre text-[#111]", r.p === 2 ? "bg-[#ffff00] pl-[30px]" : r.p === 1 ? "pl-[2px]" : "pl-[20px]")}>
                      {r.p === 1 && <Minus />}
                      {r.p === 2 && <svg viewBox="0 0 24 19" className="absolute left-[6px] top-0 w-[24px] h-[19px]"><path d="M1.500 0v9.500H22" stroke="#b8b8b8" fill="none" /></svg>}
                      <span className={clsx(r.p === 1 && "ml-[5px]")}><Mx s={r.t} /></span>
                    </div>
                    <div className={clsx("w-[45px] border-l border-[#c0c0c0] flex items-center pl-[2px] text-[#111]", r.p === 2 && "bg-[#ffff00]")}><N>1:1</N></div>
                  </div>
                ))}
                <div className="flex h-[19px]">
                  <div className="w-[22px] bg-[#fcd09a] flex items-center justify-center text-[#880000]"><N>25</N></div>
                  <div className="relative w-[151px] bg-[#ffff66] border-2 border-black flex items-center pl-[1px] whitespace-nowrap text-[#111]">
                    <span><Mx s="向).CADI(当前图纸)" /></span>
                    <i className="absolute -right-[3px] -bottom-[3px] w-[4px] h-[4px] bg-[#666] block" />
                  </div>
                  <div className="w-[45px] bg-[#ffff00] flex items-center pl-[2px] text-[#111]"><N>1:1</N></div>
                </div>
              </div>
              <VBar thumb="h-[55px] mt-[115px]" />
            </div>
            <HBar thumb="w-[14px] ml-[1px]" c="w-[218px]" />
          </div>
          <div className="mt-[10px]"><PanelHead title="CAD图层显示" /></div>
          <div className="h-[305px] ml-px mt-px border border-[#909090] bg-white pl-[12px] shrink-0">
            {["已提取的CAD图层", "CAD原始图层"].map((s) => (
              <div key={s} className="flex items-center h-[14px] whitespace-nowrap text-[#111] first:mt-[1px]">
                <svg viewBox="0 0 10 8" className="w-[10px] h-[8px] shrink-0"><path d="M0 0v8l4-4z" fill="#fff" stroke="#999" /><path d="M6 4h4" stroke="#777" strokeDasharray="1 1" /></svg>
                <svg viewBox="0 0 12 12" className="ml-[2px] w-[12px] h-[12px] shrink-0"><rect x="0.500" y="0.500" width="11" height="11" fill="#e4eaf4" stroke="#8a8a9a" /><path d="M3 6l2 2.500L9 3" stroke="#3b5ea8" strokeWidth="1.600" fill="none" /></svg>
                <span className="ml-[2px]"><Mx s={s} /></span>
              </div>
            ))}
          </div>
        </div>

        {/* center */}
        <div className="w-[733px] ml-[4px] shrink-0 flex flex-col">
          <div className={clsx(bar, "h-[26px] pl-[3px] shrink-0")}>
            <Grip c="mr-[4px]" />
            <Tool i="brush" label="删除" c="w-[52px]" />
            <Sep />
            <Tool i="copy" label="复制" c="ml-[4px] w-[51px]" />
            <Tool i="mirror" label="镜像" c="w-[51px]" />
            <Sep />
            <Tool i="move" label="移动" c="ml-[5px] w-[51px]" />
            <Tool i="turn" label="旋转" c="w-[52px]" />
            <Sep />
            <Tool i="extend" label="延伸" c="ml-[4px] w-[52px]" />
            <Tool i="trim" label="修剪" c="w-[51px]" />
            <Sep />
            <Tool i="breakk" label="打断" c="ml-[4px] w-[51px]" />
            <Tool i="merge" label="合并" c="w-[51px]" />
            <Tool i="split" label="分割" dim c="w-[51px]" />
            <Sep />
            <Tool i="align" label="对齐" arrow c="ml-[5px] w-[59px]" />
            <Tool i="offset" label="偏移" c="w-[60px]" />
          </div>
          <div className="h-[27px] pl-[8px] flex items-center shrink-0">
            <Combo label="首层" c="w-[45px]" />
            <div className="ml-[3px]"><Combo label="CAD识别" c="w-[57px]" /></div>
            <div className="ml-[3px]"><Combo label="识别梁" c="w-[57px]" /></div>
            <div className="ml-[3px]"><Combo label="WKL114" c="w-[56px]" /></div>
            <div className="ml-[4px]"><Combo label="分层1" c="w-[56px]" /></div>
            <Sep c="ml-[6px]" />
            <Tool i="attr" label="属性" on c="ml-[2px] w-[51px]" />
            <Tool i="pencil" label="编辑钢筋" c="ml-[3px] w-[109px]" />
            <More />
            <Grip c="ml-[3px]" />
            <Tool i="twopt" label="两点" c="ml-[3px] w-[51px]" />
            <Tool i="para" label="平行" c="w-[50px]" />
          </div>
          <div className={clsx(bar, "h-[30px] pl-[7px] w-[715px] shrink-0")}>
            <Tool i="cursor" label="选择" on c="w-[51px]" />
            <div className="w-[12px] flex justify-center shrink-0"><Tri /></div>
            <Sep c="ml-[3px]" />
            <Tool i="line" label="直线" c="ml-[5px] w-[51px]" />
            <Tool i="ptlen" label="点加长度" c="w-[75px]" />
            <Tool i="arc" label="三点画弧" arrow c="w-[85px]" />
            <Combo c="w-[45px]" />
            <Tool i="rect" label="矩形" c="ml-[3px] w-[52px]" />
            <Sep />
            <Tool i="origin" label="原位标注" arrow c="ml-[5px] w-[86px]" />
            <Tool i="respan" label="重提梁跨" arrow c="w-[87px]" />
            <Tool i="apply" label="应用到同名梁" c="w-[103px]" />
            <Grip />
            <div className="w-[28px] h-[30px] bg-white shrink-0" />
          </div>
          <div className={clsx(bar, "h-[28px] pl-[10px] w-[711px] shrink-0")}>
            <Tool i="locate" label="定位CAD图" c="w-[88px]" />
            <Tool i="clearc" label="清除CAD图" c="w-[88px]" />
            <Tool i="scale" label="设置比例" c="w-[75px]" />
            <Tool i="replace" label="批量替换" c="w-[75px]" />
            <Tool i="restore" label="还原CAD图元" c="w-[100px]" />
            <Tool i="patch" label="补画CAD线" c="w-[88px]" />
            <Sep />
            <Tool i="cadmark" label="修改CAD标注" c="ml-[5px] w-[100px]" />
            <Tool i="pic" label="图片管理" arrow c="w-[81px]" />
          </div>
          <div className="h-[27px] flex shrink-0">
            <div className={clsx(bar, "w-[169px] pl-[10px] shrink-0")}>
              <Tool i="phi" label="转换符号" c="w-[75px]" />
              <Tool i="lbt" label="识别连梁表" c="w-[84px]" />
            </div>
            <div className={clsx(bar, "ml-px flex-1 min-w-0 pl-[4px]")}>
              <Grip c="mr-[5px]" />
              <Tool i="edge" label="提取梁边线" c="w-[87px]" />
              <Tool i="mark" label="提取梁标注" arrow c="w-[95px]" />
              <Tool i="detect" label="识别梁" arrow c="w-[71px]" />
              <Tool i="support" label="查改支座" arrow c="w-[83px]" />
              <Tool i="identify" label="识别原位标注" arrow c="w-[101px]" />
              <More c="ml-[105px]" />
            </div>
          </div>
          <div className={clsx(bar, "h-[27px] pl-[7px] w-[565px] shrink-0")}>
            <Tool i="layer" label="图层设置" on c="w-[75px]" />
            <Sep c="ml-[4px]" />
            <Tool i="cadshow" label="显示指定图层" c="ml-[4px] w-[99px]" />
            <Tool i="cadhide" label="隐藏指定图层" c="w-[100px]" />
            <Sep />
            <Tool i="cadsel" label="选择同图层CAD图元" c="ml-[4px] w-[136px]" />
            <Tool i="cadcolor" label="选择同颜色CAD图元" c="w-[134px]" />
          </div>

          <Drawing />

          <div className={clsx(bar, "h-[32px] pl-[3px] pb-[2px] shrink-0")}>
            <Grip c="mr-[4px]" />
            <Tool i="ortho" label="正交" c="w-[48px]" />
            <Tool i="snap" label="对象捕捉" on c="w-[75px]" />
            <Tool i="dyn" label="动态输入" on c="w-[75px]" />
            <Grip c="ml-[7px]" />
            <Tool i="cross" label="交点" c="ml-[3px] w-[48px]" />
            <Tool i="perp" label="垂点" on c="w-[51px]" />
            <Tool i="mid" label="中点" on c="w-[51px]" />
            <Tool i="vertex" label="顶点" c="ml-[4px] w-[49px]" />
            <Tool i="coord" label="坐标" c="w-[56px]" />
            <Grip />
            <div className="ml-px"><Combo label="不偏移" c="w-[46px]" /></div>
            <Sep c="ml-[4px]" />
            <span className={clsx("ml-px w-[20px] text-[#9c9c9c]", sans)}>X=</span>
            <div className="flex w-[57px] h-[18px] border border-[#8a8a8a] bg-[#f4f4f4] shrink-0">
              <div className={clsx("flex-1 flex items-center justify-end pr-[3px] text-[#777]", sans)}>0</div>
              <div className="w-[11px] flex flex-col items-center justify-center gap-[3px] bg-white">
                <svg viewBox="0 0 6 4" className="w-[6px] h-[4px]"><path d="M0 4h6L3 0z" fill="#555" /></svg>
                <svg viewBox="0 0 6 4" className="w-[6px] h-[4px]"><path d="M0 0h6L3 4z" fill="#555" /></svg>
              </div>
            </div>
            <span className={clsx("ml-[2px] w-[28px] text-[#9c9c9c]", sans)}>mm</span>
            <span className={clsx("text-[#9c9c9c]", sans)}>Y=</span>
            <More c="ml-[52px]" />
          </div>

          <div className="flex flex-1 min-h-0">
            <div className="w-[12px] shrink-0 flex flex-col items-center">
              <svg viewBox="0 0 10 10" className="w-[10px] h-[10px] mt-[2px] mb-[3px] self-start"><rect x="0.500" y="0.500" width="9" height="9" fill="#e4e4e4" stroke="#666" /><path d="M2 2l6 6M8 2L2 8" stroke="#a02828" strokeWidth="1.300" /></svg>
              <div className="grid grid-cols-2 gap-x-[2px] gap-y-[3px]">
                {Array.from({ length: 44 }).map((_, i) => <i key={i} className="block w-[2px] h-[2px] bg-[#c0c0c0]" />)}
              </div>
            </div>
            <div className="flex-1 min-w-0 flex flex-col">
              <div className={clsx(bar, "h-[27px] pl-[4px] shrink-0")}>
                <Tool i="cp" label="复制跨数据" dim c="w-[87px]" />
                <Tool i="paste" label="粘贴跨数据" dim c="w-[89px]" />
                <Tool label="输入当前列数据" dim c="w-[94px]" />
                <Tool label="删除当前列数据" dim c="w-[94px]" />
                <Tool label="页面设置" c="w-[58px]" />
                <Tool label="调换起始跨" dim c="w-[70px]" />
                <Tool label="悬臂钢筋代号" />
              </div>
              <div className="mt-px w-[720px] h-[93px] border border-[#a0a0a0] bg-white flex flex-col shrink-0">
                <table className="table-fixed border-collapse w-[718px] h-[59px]">
                  <colgroup>
                    <col className="w-[31px]" /><col className="w-[41px]" /><col className="w-[61px]" /><col className="w-[61px]" />
                    <col className="w-[41px]" /><col className="w-[42px]" /><col className="w-[41px]" /><col className="w-[41px]" /><col className="w-[41px]" />
                    <col className="w-[62px]" /><col className="w-[80px]" /><col className="w-[82px]" /><col className="w-[81px]" /><col />
                  </colgroup>
                  <thead>
                    <tr className="h-[20px]">
                      <th rowSpan={2} className={th} />
                      <th rowSpan={2} className="border border-[#c0c0c0] bg-gradient-to-b from-[#fbdca0] to-[#f4c060] font-normal text-[#800080] p-0">跨号</th>
                      <th colSpan={2} className={th}>标高<M>(m)</M></th>
                      <th colSpan={7} className={th}>构件尺寸<M>(mm)</M></th>
                      <th rowSpan={2} className={th}>上通长筋</th>
                      <th colSpan={2} className={th} />
                    </tr>
                    <tr className="h-[19px]">
                      <th className={th}>起点标高</th>
                      <th className={th}>终点标高</th>
                      <th className={th}><M>A1</M></th>
                      <th className={th}><M>A2</M></th>
                      <th className={th}><M>A3</M></th>
                      <th className={th}><M>A4</M></th>
                      <th className={th}>跨长</th>
                      <th className={th}>截面<M>(B*H)</M></th>
                      <th className={th}>距左边线距离</th>
                      <th className={th}>左支座钢筋</th>
                      <th className={th} />
                    </tr>
                  </thead>
                  <tbody>
                    <tr className="h-[20px]">
                      <td className="border border-[#c0c0c0] bg-[#fcd898] text-center text-[#800040] p-0"><N>1</N></td>
                      <td className="relative border-[3px] border-[#808080] bg-[#93c0f5] p-0">
                        <i className="absolute -right-[4px] -bottom-[4px] w-[4px] h-[4px] bg-[#808080] block" />
                      </td>
                      {Array.from({ length: 12 }).map((_, i) => <td key={i} className="border border-[#c0c0c0] bg-[#a6c8ee] p-0" />)}
                    </tr>
                  </tbody>
                </table>
                <HBar thumb="w-[215px] ml-[2px]" c="mt-auto mb-[2px]" />
              </div>
            </div>
          </div>
        </div>

        {/* properties */}
        <div className="flex-1 min-w-0 ml-[2px] flex flex-col">
          <PanelHead title="属性编辑器" />
          <div className="h-[610px] mt-[2px] ml-[2px] mr-[3px] border-x border-b border-[#a0a0a0] bg-white">
            <div className="flex h-[24px] border-b border-[#c0c0c0]">
              <div className="w-[21px] bg-[#f4f4f4]" />
              <div className="w-[120px] bg-gradient-to-b from-white to-[#f0f0f0] flex items-center justify-center text-[#222]">属性名称</div>
              <div className="w-[19px] bg-gradient-to-b from-[#fcdca8] to-[#f4c478] flex items-center justify-center text-[#800080]">属</div>
              <div className="flex-1 bg-gradient-to-b from-white to-[#f0f0f0] flex items-center justify-center text-[#222] whitespace-nowrap">附加</div>
            </div>
            <div className="flex h-[19px] border-b border-[#c0c0c0]">
              <div className="w-[21px] bg-[#fcd09a] flex items-center justify-center text-[#880000]"><N>1</N></div>
              <div className="w-[120px] bg-[#3399ff] flex items-center pl-[20px] text-white">名称</div>
              <div className="w-[19px] bg-[#dcebfb] flex items-center pl-[2px] text-[#111]"><M>WK</M></div>
              <div className="flex-1 border-l border-[#c0c0c0]" />
            </div>
            {props.map((p) => (
              <div key={p.n} className="flex h-[19px] border-b border-[#c0c0c0]">
                <div className="w-[21px] bg-[#f0f0f0] border-r border-[#d0d0d0] flex items-center justify-center text-[#222]"><N>{p.n}</N></div>
                <div className={clsx("w-[120px] flex items-center whitespace-nowrap", p.gray ? "pl-[3px] text-[#808080]" : "pl-[20px]", p.blue && "text-[#0000ff]", !p.blue && !p.gray && "text-[#111]")}>
                  {p.gray && <><Minus sign="+" /><span className="ml-[4px]">{p.t}</span></>}
                  {!p.gray && p.t}
                  {(p.n === 3 || p.n === 4) && <M>(mm)</M>}
                </div>
                <div className="w-[19px] border-l border-[#c0c0c0] flex items-center pl-[2px] text-[#111] overflow-hidden whitespace-pre">{p.n === 2 ? p.v : <M>{p.v}</M>}</div>
                <div className="flex-1 border-l border-[#c0c0c0] flex items-center justify-center">
                  {p.chk && <i className="block w-[13px] h-[13px] border-2 border-[#a8a8a8] bg-gradient-to-br from-[#d8d8d8] to-white" />}
                </div>
              </div>
            ))}
          </div>
        </div>
      </div>

      {/* status bar */}
      <div className="h-[20px] shrink-0 flex items-stretch gap-[2px] text-[#111]">
        <div className="w-[148px] bg-white border border-[#e0e0e0] flex items-center pl-px"><M>X=149892 Y=132817</M></div>
        <div className="w-[78px] bg-white border border-[#e0e0e0] flex items-center pl-px">层高:<M>3.9m</M></div>
        <div className="w-[97px] bg-white border border-[#e0e0e0] flex items-center pl-px ml-px">底标高:<M>0m</M></div>
        <div className="w-[48px] bg-white border border-[#e0e0e0] flex items-center pl-px"><M>0</M></div>
        <div className="w-[914px] bg-white border border-[#e0e0e0] flex items-center pl-px">按鼠标左键指定第一个角点，或拾取构件图元</div>
        <div className="flex-1 flex items-center pl-[2px]"><M>127 FPS</M></div>
      </div>

      {/* taskbar */}
      <div className="h-[8px] shrink-0 border-t border-[#2c3c4c] bg-gradient-to-b from-[#8cb4d8] to-[#a8c8e4] flex items-end overflow-hidden">
        <div className="ml-[13px] w-[34px] h-[14px] rounded-full bg-[#4a80b8] border border-[#d0e4f4] self-start shrink-0" />
        <div className="ml-[28px] w-[16px] h-[14px] rounded-full bg-[#2ea0f0] self-start shrink-0" />
        <div className="w-[12px] h-[14px] rounded-full bg-[#f0b020] self-start shrink-0" />
      </div>
      <div className="absolute left-[136px] top-[729px] flex gap-[4px]">
        <div className="w-[58px] h-[7px] bg-white/80 rounded-t-[2px]" />
        <div className="w-[58px] h-[7px] bg-white/80 rounded-t-[2px]" />
        <div className="w-[58px] h-[7px] bg-white/80 rounded-t-[2px]" />
        <div className="w-[58px] h-[7px] bg-white/80 rounded-t-[2px]" />
      </div>

      {/* network speed badge */}
      <div className={clsx("absolute left-[1075px] top-[82px] w-[120px] h-[51px] rounded-full bg-white shadow-[0_2px_8px_rgba(0,0,0,0.3)] flex items-center pl-[6px]", sans)}>
        <div className="w-[38px] h-[38px] rounded-full bg-[#22c86f] flex items-center justify-center shrink-0">
          <svg viewBox="0 0 24 20" className="w-[24px] h-[20px]">
            <path d="M1.500 7.500c6-6 15-6 21 0M5.500 11.500c4-3.500 9-3.500 13 0M9 15c2-1.500 4-1.500 6 0" fill="none" stroke="#fff" strokeWidth="2.400" />
            <circle cx="12" cy="18" r="1.600" fill="#fff" />
          </svg>
        </div>
        <div className="ml-[8px] pt-[2px] flex flex-col gap-[9px] text-[11px] text-[#8a8a8a]">
          <div className="flex items-center">
            <svg viewBox="0 0 10 12" className="w-[10px] h-[12px] shrink-0"><path d="M2.500 12V3M0 4l2.500-4L5 4z" fill="#22c86f" stroke="#22c86f" strokeWidth=".5" /><path d="M7.500 0v9M5 8l2.500 4L10 8z" fill="#f58a1f" stroke="#f58a1f" strokeWidth=".5" /></svg>
            <span className="ml-[3px]">0.00K/s</span>
          </div>
          <div className="flex items-center">
            <svg viewBox="0 0 8 12" className="w-[8px] h-[12px] shrink-0"><rect x="2.500" y="0" width="3" height="2" fill="#22c86f" /><rect x="0.500" y="2" width="7" height="9.500" fill="#fff" stroke="#22c86f" /><rect x="1" y="6" width="6" height="5" fill="#22c86f" /></svg>
            <span className="ml-[5px]">0</span>
          </div>
        </div>
      </div>
    </div>
  );
}
